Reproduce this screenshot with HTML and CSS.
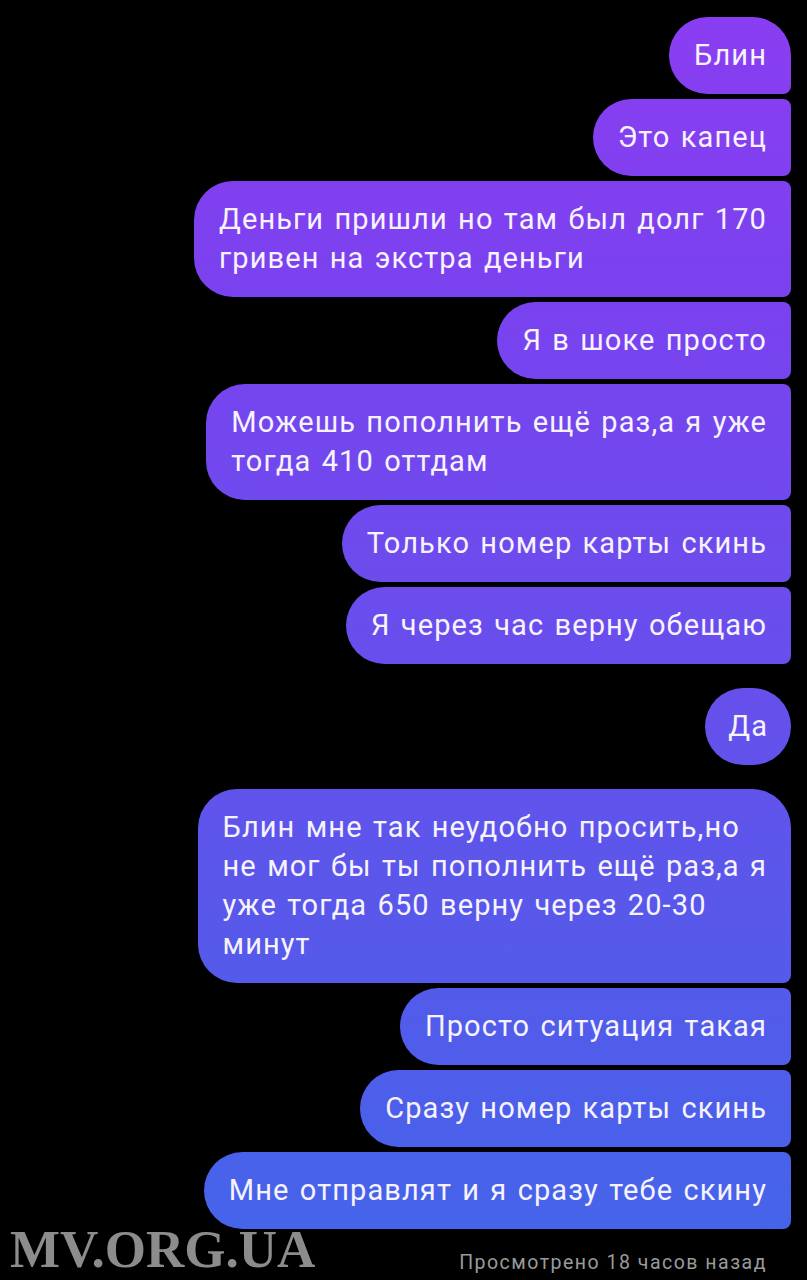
FILE: index.html
```html
<!DOCTYPE html>
<html lang="ru">
<head>
<meta charset="utf-8">
<title>Чат</title>
<link rel="stylesheet" href="styles.css">
</head>
<body>
<main class="chat">
  <div class="group">
    <div class="msg first">Блин</div>
    <div class="msg">Это капец</div>
    <div class="msg">Деньги пришли но там был долг 170<br>гривен на экстра деньги</div>
    <div class="msg">Я в шоке просто</div>
    <div class="msg">Можешь пополнить ещё раз,а я уже<br>тогда 410 оттдам</div>
    <div class="msg">Только номер карты скинь</div>
    <div class="msg">Я через час верну обещаю</div>
  </div>
  <div class="group">
    <div class="msg single">Да</div>
  </div>
  <div class="group">
    <div class="msg first">Блин мне так неудобно просить,но<br>не мог бы ты пополнить ещё раз,а я<br>уже тогда 650 верну через 20-30<br>минут</div>
    <div class="msg">Просто ситуация такая</div>
    <div class="msg">Сразу номер карты скинь</div>
    <div class="msg">Мне отправлят и я сразу тебе скину</div>
  </div>
  <footer class="status">Просмотрено 18 часов назад</footer>
</main>
<div class="watermark">MV.ORG.UA</div>
</body>
</html>
```

FILE: styles.css
```css
html, body {
  margin: 0;
  padding: 0;
  background: #000;
}
body {
  width: 807px;
  height: 1280px;
  overflow: hidden;
  position: relative;
  font-family: Roboto, "Noto Sans", sans-serif;
}
.chat {
  display: flex;
  flex-direction: column;
  align-items: flex-end;
  gap: 24px;
  padding: 17px 16px 0 0;
}
.group {
  display: flex;
  flex-direction: column;
  align-items: flex-end;
  gap: 5px;
}
.msg {
  background: linear-gradient(180deg, #8b3df2 0px, #7a42ef 300px, #6650ec 700px, #5659ea 950px, #4266ea 1280px);
  background-attachment: fixed;
  color: #f6f3ff;
  font-size: 29px;
  letter-spacing: 1.1px;
  word-spacing: 2px;
  line-height: 39px;
  padding: 19px 24px 19px 25px;
  border-radius: 39px 8px 8px 39px;
  white-space: nowrap;
}
.msg.first {
  border-top-right-radius: 39px;
}
.msg.single {
  border-radius: 39px;
  padding-left: 23px;
  padding-right: 23px;
}
.status {
  align-self: flex-end;
  margin-top: -2px;
  margin-right: 24px;
  color: #9a9a9a;
  font-size: 19.5px;
  letter-spacing: 1.5px;
  line-height: 24px;
}
.watermark {
  position: absolute;
  left: 10px;
  top: 1222px;
  font-family: "Liberation Serif", "Times New Roman", serif;
  font-weight: bold;
  font-size: 53px;
  line-height: 54px;
  color: #8c8c8c;
}
```
